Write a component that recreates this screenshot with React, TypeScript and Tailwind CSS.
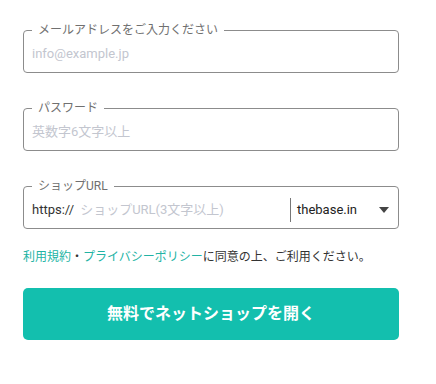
import React from "react";

const jp = { fontFamily: 'Roboto, "Noto Sans CJK JP", sans-serif' };

function Field({ label, children }: { label: string; children: React.ReactNode }) {
  return (
    <div className="relative h-[43px] rounded-[4px] border border-[#8c8c8c]">
      <span className="absolute left-[8px] top-[-9px] bg-white px-[6px] text-[12px] leading-[16px] text-[#707070]">
        {label}
      </span>
      <div className="flex h-full items-center pl-[8px] pt-[5px]">{children}</div>
    </div>
  );
}

export default function App() {
  return (
    <div className="min-h-[384px] bg-white pl-[23px] pt-[30px]" style={jp}>
      <div className="flex w-[376px] flex-col">
        <Field label="メールアドレスをご入力ください">
          <input
            className="w-full bg-transparent text-[13px] text-[#333] outline-none placeholder:text-[#c3c6cf]"
            style={jp}
            placeholder="info@example.jp"
          />
        </Field>
        <div className="h-[35px]" />
        <Field label="パスワード">
          <input
            type="password"
            className="w-full bg-transparent text-[13px] text-[#333] outline-none placeholder:text-[#c3c6cf]"
            style={jp}
            placeholder="英数字6文字以上"
          />
        </Field>
        <div className="h-[35px]" />
        <Field label="ショップURL">
          <span className="text-[13px] text-[#333]">https://</span>
          <input
            className="ml-[6px] w-[200px] bg-transparent text-[13px] text-[#333] outline-none placeholder:text-[#c3c6cf]"
            style={jp}
            placeholder="ショップURL(3文字以上)"
          />
          <div className="ml-auto flex h-[24px] w-[108px] items-center border-l border-[#777] pl-[6px]">
            <span className="text-[13px] text-[#222]">thebase.in</span>
            <svg className="ml-auto mr-[9px]" width="10" height="6" viewBox="0 0 10 6">
              <path d="M0 0 L10 0 L5 6 Z" fill="#444" />
            </svg>
          </div>
        </Field>
        <p className="mt-[19px] text-[12px] leading-[18px] text-[#333]">
          <span className="text-[#22b3a4]">利用規約</span>・<span className="text-[#22b3a4]">プライバシーポリシー</span>に同意の上、ご利用ください。
        </p>
        <button
          className="mt-[22px] flex h-[52px] w-full items-center justify-center rounded-[5px] bg-[#13bfae] text-[16px] font-bold text-white"
          style={jp}
        >
          無料でネットショップを開く
        </button>
      </div>
    </div>
  );
}
